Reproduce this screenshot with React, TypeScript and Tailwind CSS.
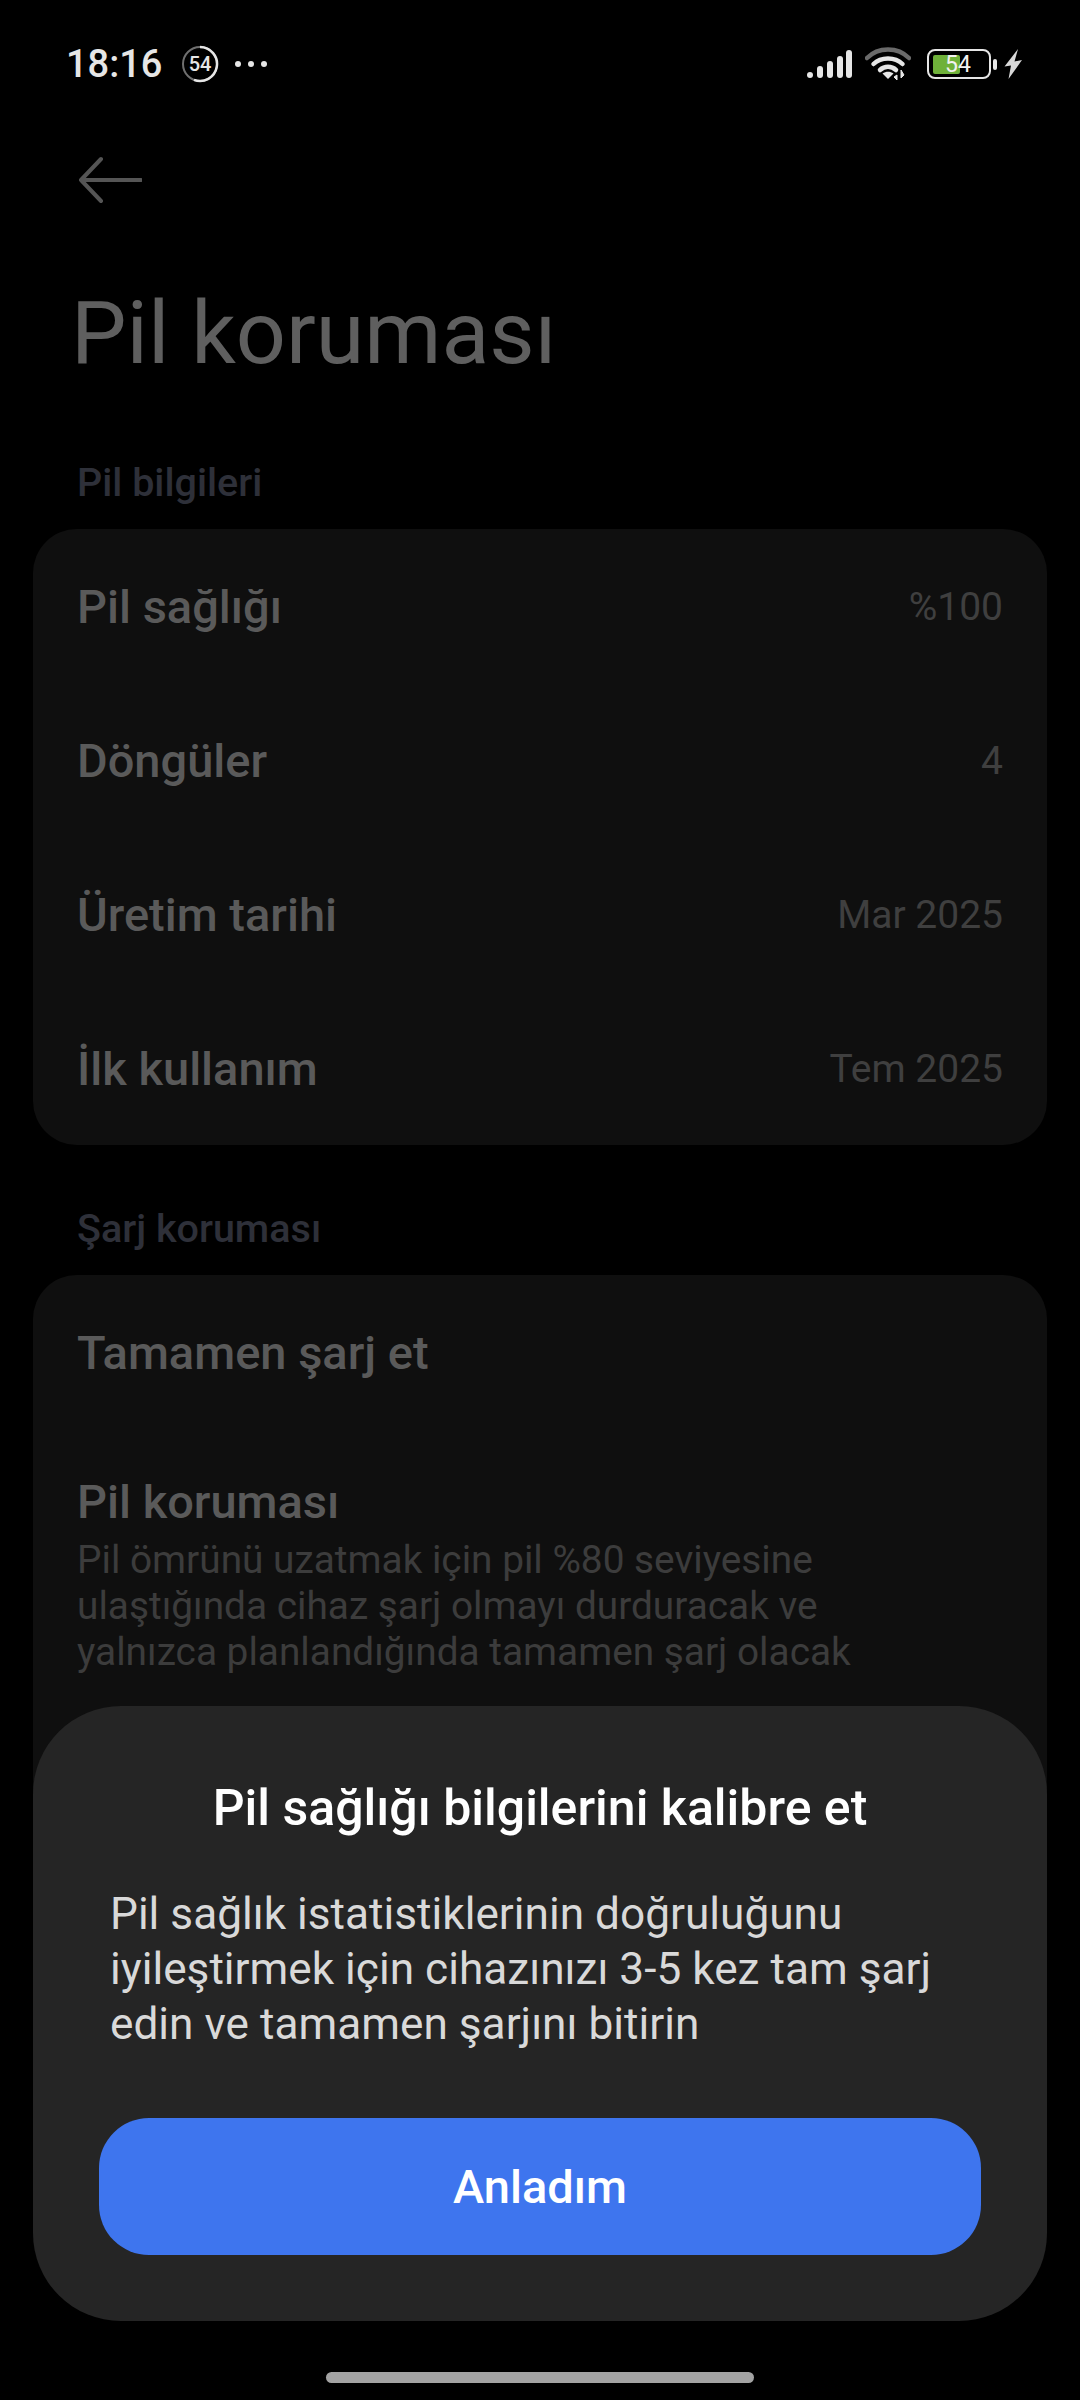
import React from "react";

const infoRows = [
  { label: "Pil sağlığı", value: "%100" },
  { label: "Döngüler", value: "4" },
  { label: "Üretim tarihi", value: "Mar 2025" },
  { label: "İlk kullanım", value: "Tem 2025" },
];

const StatusBar = () => (
  <div className="flex h-[126px] items-center justify-between pl-[66px] pr-[58px] pt-[2px] text-[#e6e6e6]">
    <div className="flex items-center">
      <span className="text-[38px] font-medium leading-none">18:16</span>
      <svg width="38" height="38" viewBox="0 0 38 38" className="ml-[19px]">
        <circle cx="19" cy="19" r="17" fill="none" stroke="#6f6f6f" strokeWidth="2" />
        <path d="M19 2a17 17 0 1 1-6 32.900" fill="none" stroke="#e6e6e6" strokeWidth="2.500" />
        <text x="19" y="26" textAnchor="middle" fontSize="20" fontWeight="500" fill="#e6e6e6" fontFamily="Roboto, sans-serif">54</text>
      </svg>
      <div className="ml-[16px] flex gap-[7px]">
        <span className="h-[6px] w-[6px] rounded-full bg-[#e6e6e6]" />
        <span className="h-[6px] w-[6px] rounded-full bg-[#e6e6e6]" />
        <span className="h-[6px] w-[6px] rounded-full bg-[#e6e6e6]" />
      </div>
    </div>
    <div className="flex items-center">
      <svg width="46" height="30" viewBox="0 0 46 30">
        <rect x="1" y="23" width="6" height="6" rx="3" fill="#e6e6e6" />
        <rect x="11" y="17" width="6" height="12" rx="3" fill="#e6e6e6" />
        <rect x="21" y="12" width="6" height="17" rx="3" fill="#e6e6e6" />
        <rect x="31" y="7" width="6" height="22" rx="3" fill="#e6e6e6" />
        <rect x="40" y="1" width="6" height="28" rx="3" fill="#e6e6e6" />
      </svg>
      <svg width="46" height="34" viewBox="0 0 46 34" className="ml-[13px]">
        <path d="M2 11C13 -0.500 33 -0.500 44 11" fill="none" stroke="#6a6a6a" strokeWidth="4.500" strokeLinecap="round" />
        <path d="M8.500 17C16 9.500 30 9.500 37.500 17" fill="none" stroke="#e6e6e6" strokeWidth="4.500" strokeLinecap="round" />
        <path d="M15 23C19.500 18.800 26.500 18.800 31 23" fill="none" stroke="#e6e6e6" strokeWidth="4.500" strokeLinecap="round" />
        <path d="M17.500 26.500L23 32L28.500 26.500C25 24 21 24 17.500 26.500Z" fill="#e6e6e6" />
        <path d="M32 33v-5l-3 2zM36 23v8l3-3z" fill="#e6e6e6" stroke="#e6e6e6" strokeWidth="1" />
      </svg>
      <div className="relative ml-[16px] h-[30px] w-[64px] rounded-[8px] border-[2.5px] border-[#e6e6e6] p-[3.5px]">
        <div className="h-full w-[27px] rounded-[2px] bg-[#6fb13a]" />
        <span className="absolute inset-y-0 left-[16px] flex items-center text-[23px] leading-none text-[#f2f2f2]">54</span>
      </div>
      <span className="ml-[2px] h-[11px] w-[4px] rounded-[2px] bg-[#e6e6e6]" />
      <svg width="18" height="30" viewBox="0 0 18 30" className="ml-[7px]">
        <path d="M14 0L0.500 17.500L7 16.500L4.500 30L18 11L10.500 12.500Z" fill="#d8d8d8" />
      </svg>
    </div>
  </div>
);

export default function App() {
  return (
    <div className="relative h-[2400px] w-[1080px] overflow-hidden bg-black font-['Roboto',sans-serif]">
      <StatusBar />

      <div className="pl-[78px] pt-[30px]">
        <svg width="64" height="48" viewBox="0 0 64 48" className="block">
          <path d="M63 24H3M23 3L3 24L23 45" fill="none" stroke="#555555" strokeWidth="4" strokeLinecap="round" strokeLinejoin="round" />
        </svg>
      </div>

      <h1 className="ml-[71px] mt-[77px] text-[88px] font-normal leading-[104px] text-[#5f5f5f]">
        Pil koruması
      </h1>

      <div className="ml-[77px] mt-[76px] text-[39.5px] font-medium leading-[44px] text-[#2e3039]">
        Pil bilgileri
      </div>

      <div className="mx-[33px] mt-[24px] rounded-[44px] bg-[#0f0f0f]">
        {infoRows.map((row) => (
          <div key={row.label} className="flex h-[154px] items-center justify-between pl-[44px] pr-[44px] pt-[2px]">
            <span className="text-[47px] font-medium text-[#5a5a5a]">{row.label}</span>
            <span className="text-[39px] text-[#3f3f3f]">{row.value}</span>
          </div>
        ))}
      </div>

      <div className="ml-[77px] mt-[62px] text-[39.5px] font-medium leading-[44px] text-[#2e3039]">
        Şarj koruması
      </div>

      <div className="mx-[33px] mt-[24px] h-[600px] rounded-[44px] bg-[#0f0f0f] pl-[44px] pr-[44px]">
        <div className="flex h-[154px] items-center pt-[2px] text-[47px] font-medium text-[#5a5a5a]">
          Tamamen şarj et
        </div>
        <div className="mt-[46px] text-[47px] font-medium leading-[54px] text-[#5a5a5a]">Pil koruması</div>
        <p className="mt-[8px] w-[800px] text-[38.8px] leading-[46px] text-[#3c3c3c]">
          Pil ömrünü uzatmak için pil %80 seviyesine ulaştığında cihaz şarj olmayı durduracak ve yalnızca
          planlandığında tamamen şarj olacak
        </p>
      </div>

      {/* dialog */}
      <div className="absolute left-[33px] top-[1706px] h-[615px] w-[1014px] rounded-[88px] bg-[#252525] px-[66px]">
        <h2 className="pt-[72px] text-center text-[50px] font-medium leading-[60px] text-white">
          Pil sağlığı bilgilerini kalibre et
        </h2>
        <p className="ml-[11px] mt-[49px] text-[44.2px] leading-[55px] text-[#d9d9d9]">
          Pil sağlık istatistiklerinin doğruluğunu iyileştirmek için cihazınızı 3-5 kez tam şarj edin ve tamamen
          şarjını bitirin
        </p>
        <button className="mt-[66px] flex h-[137px] w-[882px] items-center justify-center rounded-[50px] bg-[#3e75ee] pt-[2px] text-[47px] font-medium text-white">
          Anladım
        </button>
      </div>

      <div className="absolute bottom-[17px] left-[326px] h-[11px] w-[428px] rounded-full bg-[#a3a3a3]" />
    </div>
  );
}
